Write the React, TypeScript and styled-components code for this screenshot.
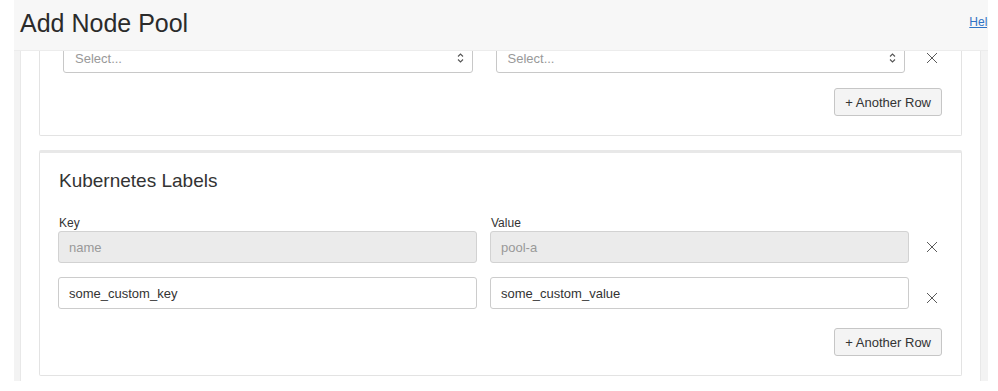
import React from 'react';
import styled, { createGlobalStyle } from 'styled-components';

const GlobalStyle = createGlobalStyle`
    html, body {
        margin: 0;
        padding: 0;
        background: #ffffff;
        font-family: "Liberation Sans", Arial, Helvetica, sans-serif;
        color: #333333;
    }
`;

const XIcon: React.FC = () => (
    <svg width="12" height="12" viewBox="0 0 12 12">
        <path d="M1 1 L11 11 M11 1 L1 11" stroke="#5a5a5a" strokeWidth="1" fill="none" />
    </svg>
);

const Chevrons: React.FC = () => (
    <svg width="7" height="12" viewBox="0 0 7 12">
        <path d="M1 4.5 L3.5 2 L6 4.5 M1 7.5 L3.5 10 L6 7.5" stroke="#555" strokeWidth="1.1" fill="none" />
    </svg>
);

type RowProps = { $gap: number; $xgap: number };

const App: React.FC = () => {
    return (
        <>
            <GlobalStyle />
            <Panel>
                <Header>
                    <Title>Add Node Pool</Title>
                    <HelpLink href="#">Help</HelpLink>
                </Header>
                <Body>
                    <Scroller>
                        <Card $first>
                            <Row $gap={23} $xgap={17}>
                                <Field>
                                    <Select>
                                        <span>Select...</span>
                                        <Chevrons />
                                    </Select>
                                </Field>
                                <Field>
                                    <Select>
                                        <span>Select...</span>
                                        <Chevrons />
                                    </Select>
                                </Field>
                                <RemoveCell $drop={0} $height={30}>
                                    <XIcon />
                                </RemoveCell>
                            </Row>
                            <Actions $top={15}>
                                <AddButton>+ Another Row</AddButton>
                            </Actions>
                        </Card>

                        <Card>
                            <CardTitle>Kubernetes Labels</CardTitle>
                            <Row $gap={13} $xgap={13}>
                                <Field>
                                    <Label>Key</Label>
                                    <Input value="name" disabled readOnly />
                                </Field>
                                <Field>
                                    <Label>Value</Label>
                                    <Input value="pool-a" disabled readOnly />
                                </Field>
                                <RemoveCell $drop={0} $height={32}>
                                    <XIcon />
                                </RemoveCell>
                            </Row>
                            <Row $gap={13} $xgap={13} style={{ marginTop: 14 }}>
                                <Field>
                                    <Input defaultValue="some_custom_key" />
                                </Field>
                                <Field>
                                    <Input defaultValue="some_custom_value" />
                                </Field>
                                <RemoveCell $drop={5} $height={32}>
                                    <XIcon />
                                </RemoveCell>
                            </Row>
                            <Actions $top={19}>
                                <AddButton>+ Another Row</AddButton>
                            </Actions>
                        </Card>
                    </Scroller>
                </Body>
            </Panel>
        </>
    );
};

const Panel = styled.div`
    margin-left: 14px;
    width: 974px;
    height: 391px;
    display: flex;
    flex-direction: column;
    overflow: hidden;
`;

const Header = styled.header`
    height: 51px;
    flex: none;
    background: #f7f7f7;
    border-bottom: 1px solid #ececec;
    display: flex;
    align-items: flex-start;
    justify-content: space-between;
    padding: 8px 0 0 6px;
    box-sizing: border-box;
    overflow: hidden;
`;

const Title = styled.h1`
    margin: 0;
    font-size: 25px;
    line-height: 30px;
    font-weight: normal;
    color: #2b2b2b;
`;

const HelpLink = styled.a`
    margin: 7px -6px 0 0;
    font-size: 12px;
    line-height: 14px;
    color: #2f72c4;
    text-decoration: underline;
`;

const Body = styled.div`
    height: 330px;
    flex: none;
    border-left: 6px solid #f3f3f3;
    border-right: 7px solid #f3f3f3;
    box-sizing: border-box;
`;

const Scroller = styled.div`
    height: 100%;
    border-left: 1px solid #e8e8e8;
    border-right: 1px solid #e8e8e8;
    overflow: hidden;
    padding: 0 18px;
    box-sizing: border-box;
`;

const Card = styled.section<{ $first?: boolean }>`
    border: 1px solid #e3e3e3;
    border-top: 3px solid #e8e8e8;
    border-radius: 2px;
    background: #ffffff;
    padding: 17px 19px 19px ${p => (p.$first ? 23 : 18)}px;
    margin-top: ${p => (p.$first ? -28 : 14)}px;
`;

const CardTitle = styled.h2`
    margin: 0 0 24px 1px;
    font-size: 19px;
    line-height: 22px;
    font-weight: normal;
    color: #333333;
`;

const Row = styled.div<RowProps>`
    display: flex;
    align-items: flex-end;

    & > * + * {
        margin-left: ${p => p.$gap}px;
    }

    & > *:last-child {
        margin-left: ${p => p.$xgap}px;
    }
`;

const Field = styled.div`
    flex: 1;
    min-width: 0;
    display: flex;
    flex-direction: column;
`;

const Label = styled.label`
    font-size: 12px;
    line-height: 14px;
    color: #333333;
    margin: 0 0 1px 1px;
`;

const Input = styled.input`
    height: 32px;
    box-sizing: border-box;
    border: 1px solid #cccccc;
    border-radius: 3px;
    padding: 0 10px;
    font-family: inherit;
    font-size: 13px;
    color: #333333;
    background: #ffffff;
    outline: none;

    &:disabled {
        background: #ebebeb;
        color: #999999;
        border-color: #d2d2d2;
    }
`;

const Select = styled.div`
    height: 30px;
    box-sizing: border-box;
    border: 1px solid #c8c8c8;
    border-radius: 3px;
    padding: 0 8px 0 11px;
    display: flex;
    align-items: center;
    justify-content: space-between;
    font-size: 13px;
    color: #999999;
    background: #ffffff;
`;

const RemoveCell = styled.div<{ $drop: number; $height: number }>`
    width: 20px;
    flex: none;
    height: ${p => p.$height}px;
    box-sizing: border-box;
    padding-top: ${p => p.$drop * 2}px;
    display: flex;
    align-items: center;
    justify-content: center;
`;

const Actions = styled.div<{ $top: number }>`
    display: flex;
    justify-content: flex-end;
    margin-top: ${p => p.$top}px;
`;

const AddButton = styled.button`
    height: 28px;
    padding: 0 10px;
    border: 1px solid #c6c6c6;
    border-radius: 3px;
    background: #f4f4f4;
    font-family: inherit;
    font-size: 13px;
    color: #333333;
    cursor: pointer;
`;

export default App;
